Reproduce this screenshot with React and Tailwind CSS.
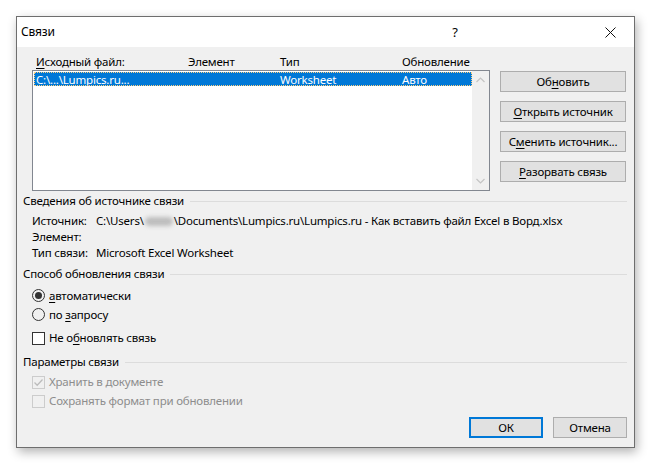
import React from "react";

const U = ({ children }) => <span className="underline underline-offset-2 decoration-1">{children}</span>;

function SectionTitle({ children }) {
  return (
    <div className="flex items-center h-[16px] pl-[6px] pr-[7px]">
      <span className="whitespace-nowrap text-[#000]">{children}</span>
      <div className="flex-1 h-px bg-[#dcdcdc] ml-[6px]" />
    </div>
  );
}

function Btn({ children, primary }) {
  return (
    <div
      className={
        "w-[126px] h-[21px] flex items-center justify-center bg-[#e1e1e1] text-black " +
        (primary ? "border-2 border-[#0078d7]" : "border border-[#adadad]")
      }
    >
      {children}
    </div>
  );
}

function Chevron({ up }) {
  return (
    <svg width="9" height="6" viewBox="0 0 9 6" className="block">
      <path
        d={up ? "M0.5 5 L4.5 1 L8.5 5" : "M0.5 1 L4.5 5 L8.5 1"}
        fill="none"
        stroke="#c4c4c4"
        strokeWidth="1.2"
      />
    </svg>
  );
}

export default function App() {
  return (
    <div
      className="w-[650px] h-[464px] bg-white pt-[16px] pl-[16px] text-[11.5px] tracking-[-0.2px] leading-[16px] text-black"
      style={{ fontFamily: '"Noto Sans", "Segoe UI", sans-serif' }}
    >
      <div className="w-[619px] h-[432px] border border-[#6e6e6e] bg-[#f0f0f0] flex flex-col shadow-[2px_4px_10px_rgba(0,0,0,0.3)]">
        {/* title bar */}
        <div className="h-[30px] bg-white flex items-center pl-[4px] shrink-0">
          <span className="text-[12px]">Связи</span>
          <div className="flex-1" />
          <span className="w-[20px] text-center text-[13px] mr-[140px]">?</span>
          <svg width="11" height="11" viewBox="0 0 11 11" className="mr-[18px]">
            <path d="M0.5 0.5 L10.5 10.5 M10.5 0.5 L0.5 10.5" stroke="#111" strokeWidth="1" />
          </svg>
        </div>

        {/* body */}
        <div className="flex-1 flex flex-col pt-[6px]">
          <div className="flex pl-[15px]">
            <div className="w-[458px] flex flex-col">
              <div className="h-[17px] flex items-center text-black">
                <span className="w-[156px] pl-[4px]"><U>И</U>сходный файл:</span>
                <span className="w-[92px]">Элемент</span>
                <span className="w-[122px]">Тип</span>
                <span>Обновление</span>
              </div>
              <div className="h-[121px] border border-[#828790] bg-white flex">
                <div className="flex-1 pt-[1px] pl-[1px]">
                  <div className="h-[14px] bg-[#0078d7] text-white flex items-center outline-1 outline-dotted outline-[#ffd080] -outline-offset-1">
                    <span className="w-[154px] pl-[2px] leading-[13px]">C:\...\Lumpics.ru...</span>
                    <span className="w-[92px]"></span>
                    <span className="w-[122px] leading-[13px]">Worksheet</span>
                    <span className="leading-[13px]">Авто</span>
                  </div>
                </div>
                <div className="w-[17px] bg-[#f0f0f0] flex flex-col items-center justify-between py-[6px]">
                  <Chevron up />
                  <Chevron />
                </div>
              </div>
            </div>
            <div className="ml-[10px] pt-[18px] flex flex-col gap-[9px]">
              <Btn>Об<U>н</U>овить</Btn>
              <Btn><U>О</U>ткрыть источник</Btn>
              <Btn>С<U>м</U>енить источник...</Btn>
              <Btn><U>Р</U>азорвать связь</Btn>
            </div>
          </div>

          <div className="mt-[2px]">
            <SectionTitle>Сведения об источнике связи</SectionTitle>
          </div>
          <div className="mt-[4px] pl-[15px] flex flex-col">
            <div className="h-[16px] flex items-center">
              <span className="w-[64px]">Источник:</span>
              <span className="flex items-center whitespace-nowrap">
                C:\Users\
                <span className="inline-block w-[28px] h-[9px] bg-[#bdbdbd] blur-[2px] rounded-full mx-[1px]" />
                \Documents\Lumpics.ru\Lumpics.ru - Как вставить файл Excel в Ворд.xlsx
              </span>
            </div>
            <div className="h-[16px] flex items-center">
              <span className="w-[64px]">Элемент:</span>
            </div>
            <div className="h-[16px] flex items-center">
              <span className="w-[64px]">Тип связи:</span>
              <span>Microsoft Excel Worksheet</span>
            </div>
          </div>

          <div className="mt-[5px]">
            <SectionTitle>Способ обновления связи</SectionTitle>
          </div>
          <div className="mt-[4px] pl-[15px] flex flex-col">
            <div className="h-[19px] flex items-center">
              <span className="w-[13px] h-[13px] rounded-full border border-[#333] flex items-center justify-center">
                <span className="w-[7px] h-[7px] rounded-full bg-[#333]" />
              </span>
              <span className="ml-[4px]"><U>а</U>втоматически</span>
            </div>
            <div className="h-[19px] flex items-center">
              <span className="w-[13px] h-[13px] rounded-full border border-[#333]" />
              <span className="ml-[4px]">по <U>з</U>апросу</span>
            </div>
            <div className="h-[16px] mt-[6px] flex items-center">
              <span className="w-[13px] h-[13px] border border-[#333] bg-white" />
              <span className="ml-[4px]">Не о<U>б</U>новлять связь</span>
            </div>
          </div>

          <div className="mt-[8px]">
            <SectionTitle>Параметры связи</SectionTitle>
          </div>
          <div className="mt-[4px] pl-[15px] flex flex-col text-[#8d8d8d]">
            <div className="h-[16px] flex items-center">
              <span className="w-[13px] h-[13px] border border-[#cccccc] flex items-center justify-center">
                <svg width="11" height="11" viewBox="0 0 11 11">
                  <path d="M1.5 5.5 L4.2 8.2 L9.5 2.5" fill="none" stroke="#bcbcbc" strokeWidth="1.3" />
                </svg>
              </span>
              <span className="ml-[4px]">Хранить в документе</span>
            </div>
            <div className="h-[16px] mt-[3px] flex items-center">
              <span className="w-[13px] h-[13px] border border-[#cccccc]" />
              <span className="ml-[4px]">Сохранять формат при обновлении</span>
            </div>
          </div>

          <div className="mt-[8px] flex justify-end gap-[10px] pr-[7px]">
            <div className="w-[74px] h-[21px] flex items-center justify-center bg-[#e1e1e1] border-2 border-[#0078d7]">ОК</div>
            <div className="w-[74px] h-[21px] flex items-center justify-center bg-[#e1e1e1] border border-[#adadad]">Отмена</div>
          </div>
        </div>
      </div>
    </div>
  );
}
